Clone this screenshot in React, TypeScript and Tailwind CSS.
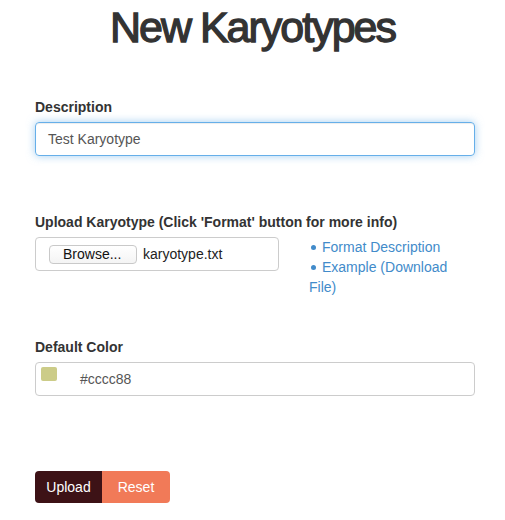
import React from "react";

function Dot() {
  return <span className="inline-block w-[5px] h-[5px] rounded-full bg-[#428bca] ml-[2px] mr-[6px] align-[2px]" />;
}

export default function App() {
  return (
    <div className="w-[505px] h-[520px] bg-white text-[14px] text-[#333] font-['Liberation_Sans',Arial,sans-serif] overflow-hidden">
      <h1 className="mt-[3px] h-[48px] leading-[48px] text-center text-[43px] font-normal tracking-[-2px] text-[#333] [-webkit-text-stroke:1.3px_#333]">
        New Karyotypes
      </h1>
      <div className="pl-[35px] pt-[46px]">
        <label className="block font-bold leading-[20px] h-[20px]">Description</label>
        <div className="mt-[5px] w-[440px] h-[34px] rounded-[4px] border border-[#66afe9] shadow-[inset_0_1px_1px_rgba(0,0,0,0.075),0_0_8px_rgba(102,175,233,0.6)] flex items-center pl-[12px] text-[#555]">
          Test Karyotype
        </div>

        <label className="block mt-[56px] font-bold leading-[20px] h-[20px]">
          Upload Karyotype (Click 'Format' button for more info)
        </label>
        <div className="mt-[5px] flex items-start h-[60px]">
          <div className="w-[244px] h-[34px] rounded-[4px] border border-[#ccc] flex items-center pl-[13px]">
            <div className="h-[19px] w-[88px] rounded-[4px] border border-[#c9c9c9] bg-gradient-to-b from-white to-[#f4f4f4] flex items-center pl-[13px] leading-[17px] text-[#111]">
              Browse...
            </div>
            <span className="ml-[6px] text-[#222]">karyotype.txt</span>
          </div>
          <ul className="ml-[30px] w-[145px] leading-[20px] text-[#428bca]">
            <li className="h-[20px]">
              <Dot />Format Description
            </li>
            <li>
              <Dot />Example (Download File)
            </li>
          </ul>
        </div>

        <label className="block mt-[40px] font-bold leading-[20px] h-[20px]">Default Color</label>
        <div className="mt-[5px] w-[440px] h-[34px] rounded-[4px] border border-[#ccc] flex items-start pl-[5px] text-[#555]">
          <div className="mt-[4px] w-[16px] h-[14px] rounded-[2px] bg-[#cccc88]" />
          <span className="ml-[23px] leading-[32px]">#cccc88</span>
        </div>

        <div className="mt-[75px] flex">
          <div className="w-[67px] h-[32px] rounded-l-[4px] bg-[#3d1216] text-white flex items-center justify-center">
            Upload
          </div>
          <div className="w-[68px] h-[32px] rounded-r-[4px] bg-[#f17a58] text-white flex items-center justify-center">
            Reset
          </div>
        </div>
      </div>
    </div>
  );
}
